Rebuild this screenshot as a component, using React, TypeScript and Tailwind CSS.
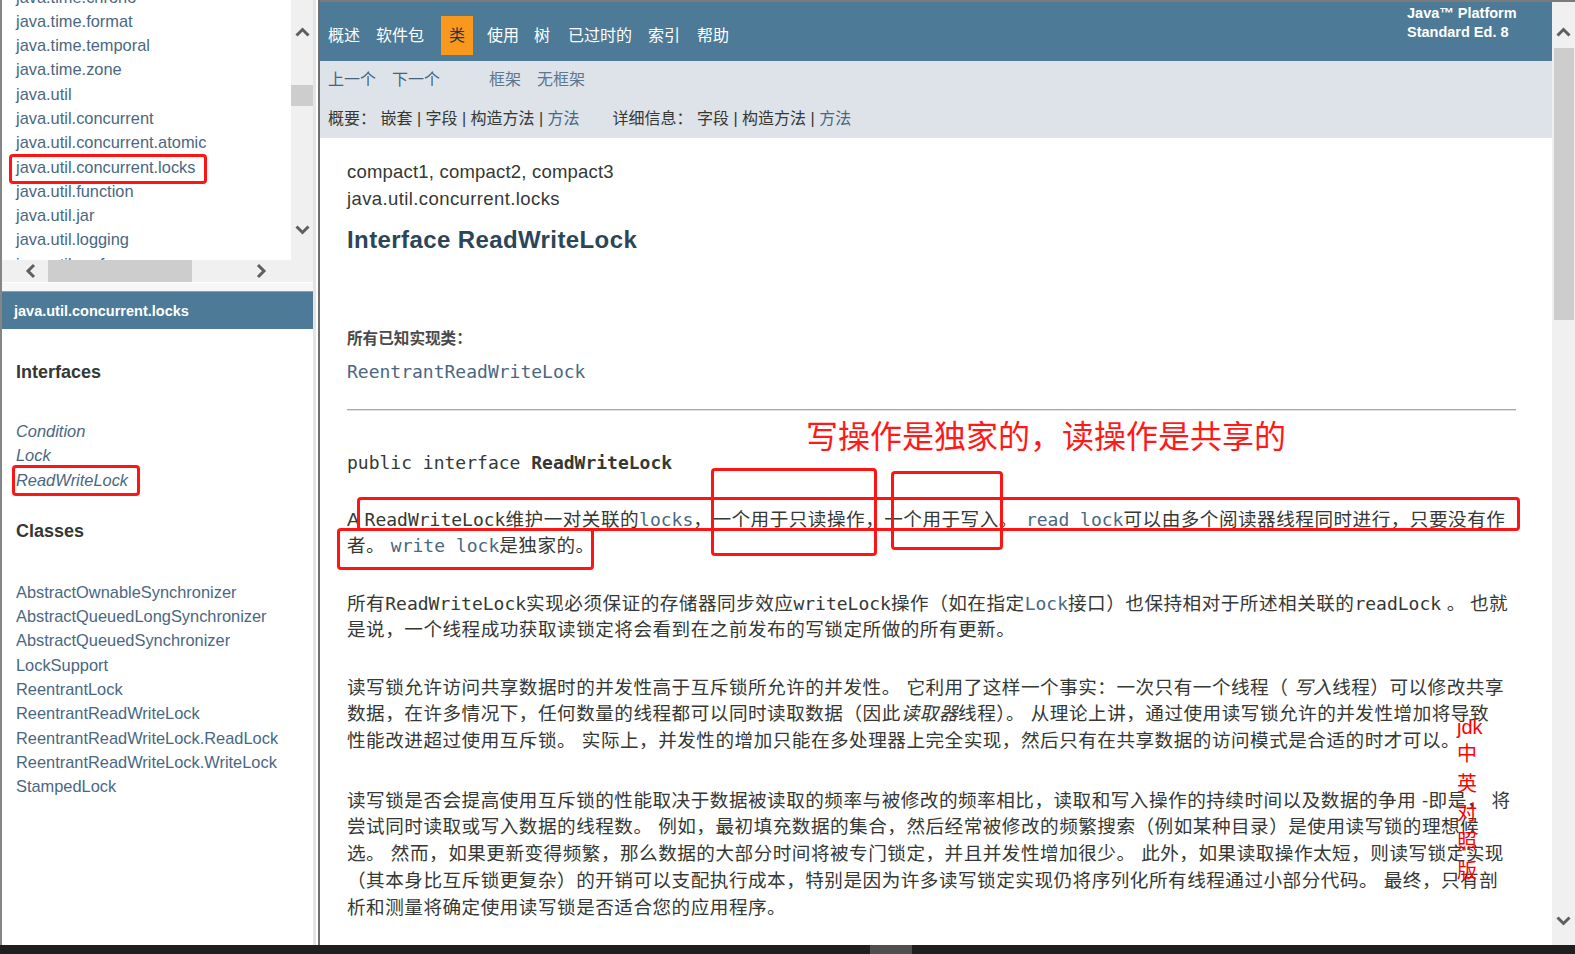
import React from 'react';

const sans = "font-['Liberation_Sans','Noto_Sans_CJK_SC',sans-serif]";
const mono = "font-['DejaVu_Sans_Mono','Liberation_Mono','Noto_Sans_CJK_SC',monospace]";

const Chevron = ({ dir }: { dir: 'up' | 'down' | 'left' | 'right' }) => {
  const rot = { up: 'rotate-0', down: 'rotate-180', left: '-rotate-90', right: 'rotate-90' }[dir];
  return (
    <svg width="15" height="10" viewBox="0 0 15 10" className={rot}>
      <path d="M1.5 8.5 L7.5 2.5 L13.5 8.5" stroke="#5f5f5f" strokeWidth="3" fill="none" />
    </svg>
  );
};

const RedBox = ({ className }: { className: string }) => (
  <div className={`absolute border-[3px] border-[#ff1414] rounded-[4px] pointer-events-none ${className}`} />
);

const C = ({ children }: { children: React.ReactNode }) => (
  <code className={`${mono} text-[18px] tracking-normal text-[#353833]`}>{children}</code>
);
const L = ({ children, className = '' }: { children: React.ReactNode; className?: string }) => (
  <code className={`${mono} text-[18px] tracking-normal text-[#4a6782] ${className}`}>{children}</code>
);

const packages = [
  'java.time.chrono',
  'java.time.format',
  'java.time.temporal',
  'java.time.zone',
  'java.util',
  'java.util.concurrent',
  'java.util.concurrent.atomic',
  'java.util.concurrent.locks',
  'java.util.function',
  'java.util.jar',
  'java.util.logging',
  'java.util.prefs',
];

const classes = [
  'AbstractOwnableSynchronizer',
  'AbstractQueuedLongSynchronizer',
  'AbstractQueuedSynchronizer',
  'LockSupport',
  'ReentrantLock',
  'ReentrantReadWriteLock',
  'ReentrantReadWriteLock.ReadLock',
  'ReentrantReadWriteLock.WriteLock',
  'StampedLock',
];

const LeftFrame = () => (
  <div className="w-[318px] shrink-0 flex border-l-2 border-[#858585]">
    <div className="w-[311px] flex flex-col">
      {/* package list */}
      <div className="flex h-[260px]">
        <div className="flex-1 relative overflow-hidden">
          <ul className="mt-[-15.5px] pl-[14px]">
            {packages.map((p) => (
              <li key={p} className="h-[24.3px] leading-[24.3px] text-[16.4px] text-[#4a6782] whitespace-nowrap">
                {p}
              </li>
            ))}
          </ul>
          <RedBox className="left-[7px] top-[154px] w-[198px] h-[30px]" />
        </div>
        <div className="w-[22px] bg-[#f0f0f0] flex flex-col items-center">
          <div className="mt-[27px] h-[10px]"><Chevron dir="up" /></div>
          <div className="mt-[48px] h-[21px] w-[22px] bg-[#cdcdcd]" />
          <div className="mt-[119px] h-[10px]"><Chevron dir="down" /></div>
        </div>
      </div>
      <div className="flex h-[22px] bg-[#f0f0f0]">
        <div className="flex-1 flex items-center">
          <div className="ml-[21px] w-[15px]"><Chevron dir="left" /></div>
          <div className="ml-[10px] w-[144px] h-[22px] bg-[#cdcdcd]" />
          <div className="ml-[62px] w-[15px]"><Chevron dir="right" /></div>
        </div>
        <div className="w-[22px] bg-[#f0f0f0]" />
      </div>
      <div className="h-[9px] bg-[#f7f7f7] border-t border-[#ffffff]" />
      {/* class list */}
      <div className="flex-1 flex flex-col border-t border-[#9a9a9a]">
        <div className="h-[37px] bg-[#4d7a97] flex items-center pl-[12px] pt-[2px]">
          <span className="text-white font-bold text-[14.5px]">java.util.concurrent.locks</span>
        </div>
        <h2 className="mt-[31px] pl-[14px] text-[18px] leading-[24px] font-bold text-[#353833]">Interfaces</h2>
        <ul className="mt-[35px] pl-[14px] relative">
          {['Condition', 'Lock', 'ReadWriteLock'].map((n) => (
            <li key={n} className="h-[24.3px] leading-[24.3px] text-[16.4px] italic text-[#4a6782]">
              {n}
            </li>
          ))}
          <RedBox className="left-[10px] top-[46px] w-[128px] h-[31px]" />
        </ul>
        <h2 className="mt-[27px] pl-[14px] text-[18px] leading-[24px] font-bold text-[#353833]">Classes</h2>
        <ul className="mt-[37px] pl-[14px]">
          {classes.map((n) => (
            <li key={n} className="h-[24.3px] leading-[24.3px] text-[16.4px] text-[#4a6782] whitespace-nowrap">
              {n}
            </li>
          ))}
        </ul>
      </div>
    </div>
    <div className="w-[3px] bg-[#e4e4e4]" />
    <div className="w-[2px] bg-white" />
  </div>
);

const Para = ({ children, className = '' }: { children: React.ReactNode; className?: string }) => (
  <div className={`text-[18.6px] leading-[26.8px] tracking-[0.5px] text-[#353833] ${className}`}>{children}</div>
);

const Line = ({ children }: { children: React.ReactNode }) => <div className="whitespace-nowrap">{children}</div>;

const RightFrame = () => (
  <div className="flex-1 min-w-0 flex flex-col">
    <div className="h-[2px] bg-[#7b7b7b]" />
    <div className="flex flex-1 min-h-0">
      <div className="flex-1 flex flex-col min-w-0">
        {/* top nav */}
        <div className="h-[59px] bg-[#4d7a97] flex">
          <div className="flex items-center pt-[8px] pl-[8px] text-[16px] text-white">
            <span className="mr-[16px]">概述</span>
            <span className="mr-[17px]">软件包</span>
            <span className="mr-[14px] h-[39px] px-[8px] bg-[#f8981d] text-[#253441] flex items-center">类</span>
            <span className="mr-[15px]">使用</span>
            <span className="mr-[18px]">树</span>
            <span className="mr-[16px]">已过时的</span>
            <span className="mr-[17px]">索引</span>
            <span>帮助</span>
          </div>
          <div className="ml-auto w-[145px] pt-[2px] text-white font-bold text-[14.5px] leading-[19px]">
            <div>Java™ Platform</div>
            <div>Standard Ed. 8</div>
          </div>
        </div>
        {/* sub nav */}
        <div className="h-[77px] bg-[#dee3e9] pl-[8px] pt-[8px] text-[16px]">
          <div className="h-[22px] leading-[22px] flex">
            <span className="text-[#45637d]">上一个</span>
            <span className="ml-[16px] text-[#45637d]">下一个</span>
            <span className="ml-[49px] text-[#5b7791]">框架</span>
            <span className="ml-[16px] text-[#5b7791]">无框架</span>
          </div>
          <div className="mt-[17px] h-[22px] leading-[22px] flex whitespace-pre text-[#353833]">
            <span>概要： 嵌套 | 字段 | 构造方法 | </span>
            <span className="text-[#4a6782]">方法</span>
            <span className="ml-[33px]">详细信息： 字段 | 构造方法 | </span>
            <span className="text-[#4a6782]">方法</span>
          </div>
        </div>
        {/* content */}
        <div className="flex-1 relative overflow-hidden pl-[27px] pr-[36px] pt-[19.5px]">
          <div className="text-[18.5px] leading-[27px] text-[#353833] tracking-[0.2px]">compact1, compact2, compact3</div>
          <div className="text-[18.5px] leading-[27px] text-[#353833] tracking-[0.4px]">java.util.concurrent.locks</div>
          <h1 className="mt-[13.5px] text-[24px] leading-[30px] font-bold text-[#2c4557] tracking-[0.4px]">Interface ReadWriteLock</h1>
          <div className="mt-[73px] text-[15.6px] leading-[22px] font-bold text-[#4a4a4a]">所有已知实现类：</div>
          <div className="mt-[9px] leading-[26px]">
            <L>ReentrantReadWriteLock</L>
          </div>
          <div className="mt-[23px] h-[2px] bg-[#a8a8a8] border-b border-[#e0e0e0]" />
          <div className="mt-[37.5px] leading-[27px] text-[#353833]">
            <span className={`${mono} text-[18px]`}>public interface </span>
            <span className={`${mono} text-[18px] font-bold`}>ReadWriteLock</span>
          </div>

          <Para className="mt-[30px]">
            <Line>
              A <C>ReadWriteLock</C>维护一对关联的<L>locks</L>，一个用于只读操作，一个用于写入。
              <L className="ml-[8px]">read lock</L>可以由多个阅读器线程同时进行，只要没有作
            </Line>
            <Line>
              者。 <L>write lock</L>是独家的。
            </Line>
          </Para>

          <Para className="mt-[30.5px]">
            <Line>
              所有<C>ReadWriteLock</C>实现必须保证的存储器同步效应<C>writeLock</C>操作（如在指定<L>Lock</L>接口）也保持相对于所述相关联的<C>readLock</C> 。
              <span className="ml-[4px]">也就</span>
            </Line>
            <Line>是说，一个线程成功获取读锁定将会看到在之前发布的写锁定所做的所有更新。</Line>
          </Para>

          <Para className="mt-[30.5px]">
            <Line>
              读写锁允许访问共享数据时的并发性高于互斥锁所允许的并发性。 它利用了这样一个事实：一次只有一个线程（ <i>写入</i>线程）可以修改共享
            </Line>
            <Line>
              数据，在许多情况下，任何数量的线程都可以同时读取数据（因此<i>读取器</i>线程）。 从理论上讲，通过使用读写锁允许的并发性增加将导致
            </Line>
            <Line>性能改进超过使用互斥锁。 实际上，并发性的增加只能在多处理器上完全实现，然后只有在共享数据的访问模式是合适的时才可以。</Line>
          </Para>

          <Para className="mt-[32.5px]">
            <Line>读写锁是否会提高使用互斥锁的性能取决于数据被读取的频率与被修改的频率相比，读取和写入操作的持续时间以及数据的争用 -即是， 将</Line>
            <Line>尝试同时读取或写入数据的线程数。 例如，最初填充数据的集合，然后经常被修改的频繁搜索（例如某种目录）是使用读写锁的理想候</Line>
            <Line>选。 然而，如果更新变得频繁，那么数据的大部分时间将被专门锁定，并且并发性增加很少。 此外，如果读取操作太短，则读写锁定实现</Line>
            <Line>（其本身比互斥锁更复杂）的开销可以支配执行成本，特别是因为许多读写锁定实现仍将序列化所有线程通过小部分代码。 最终，只有剖</Line>
            <Line>析和测量将确定使用读写锁是否适合您的应用程序。</Line>
          </Para>

          {/* annotations */}
          <div className="absolute left-[486px] top-[279px] text-[32px] leading-[40px] text-[#ff1a1a] whitespace-nowrap">
            写操作是独家的，读操作是共享的
          </div>
          <RedBox className="left-[37px] top-[359px] w-[1163px] h-[34px]" />
          <RedBox className="left-[17px] top-[390px] w-[257px] h-[42px]" />
          <RedBox className="left-[391px] top-[330px] w-[166px] h-[88px]" />
          <RedBox className="left-[571px] top-[333px] w-[112px] h-[79px]" />
          <div className="absolute left-[1137px] top-[577px] flex flex-col items-start text-[#ff0000] text-[20px]">
            <span className="h-[25px] leading-[25px]">jdk</span>
            <span className="h-[29px] leading-[29px]">中</span>
            <span className="h-[30px] leading-[30px]">英</span>
            <span className="h-[29px] leading-[29px]">对</span>
            <span className="h-[29px] leading-[29px]">照</span>
            <span className="h-[29px] leading-[29px]">版</span>
          </div>
        </div>
      </div>
      {/* page scrollbar */}
      <div className="w-[23px] shrink-0 bg-[#f0f0f0] flex flex-col items-center">
        <div className="mt-[25px] h-[10px]"><Chevron dir="up" /></div>
        <div className="mt-[11px] h-[272px] w-[20px] bg-[#cdcdcd]" />
        <div className="mt-[596px] h-[10px]"><Chevron dir="down" /></div>
      </div>
    </div>
  </div>
);

export default function App() {
  return (
    <div className={`w-[1575px] h-[954px] overflow-hidden bg-white flex flex-col ${sans}`}>
      <div className="flex h-[945px]">
        <LeftFrame />
        <div className="w-[2px] shrink-0 bg-[#6f6f6f]" />
        <RightFrame />
      </div>
      <div className="h-[9px] bg-[#1f1f1f] flex">
        <div className="w-[870px]" />
        <div className="w-[42px] bg-[#4f4f4f]" />
      </div>
    </div>
  );
}
